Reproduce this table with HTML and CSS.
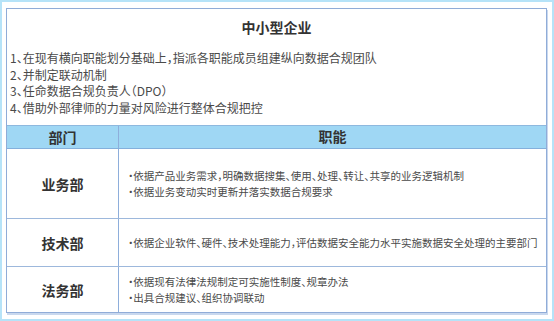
FILE: index.html
```html
<!DOCTYPE html>
<html lang="zh">
<head>
<meta charset="utf-8">
<link rel="stylesheet" href="styles.css">
</head>
<body>
<div class="frame">
  <div class="panel">
    <div class="title">中小型企业</div>
    <ol class="steps">
      <li>1、在现有横向职能划分基础上，指派各职能成员组建纵向数据合规团队</li>
      <li>2、并制定联动机制</li>
      <li>3、任命数据合规负责人（DPO）</li>
      <li>4、借助外部律师的力量对风险进行整体合规把控</li>
    </ol>
    <div class="table">
      <div class="row head">
        <div class="dept">部门</div>
        <div class="duty center">职能</div>
      </div>
      <div class="row r1">
        <div class="dept">业务部</div>
        <div class="duty">
          <p>·依据产品业务需求，明确数据搜集、使用、处理、转让、共享的业务逻辑机制</p>
          <p>·依据业务变动实时更新并落实数据合规要求</p>
        </div>
      </div>
      <div class="row r2">
        <div class="dept">技术部</div>
        <div class="duty">
          <p>·依据企业软件、硬件、技术处理能力，评估数据安全能力水平实施数据安全处理的主要部门</p>
        </div>
      </div>
      <div class="row r3">
        <div class="dept">法务部</div>
        <div class="duty">
          <p>·依据现有法律法规制定可实施性制度、规章办法</p>
          <p>·出具合规建议、组织协调联动</p>
        </div>
      </div>
    </div>
  </div>
</div>
</body>
</html>
```
FILE: styles.css
```css
* { box-sizing: border-box; }
html, body { margin: 0; padding: 0; background: #ffffff; }
body {
  font-family: "Noto Sans CJK SC", "Noto Sans", sans-serif;
  font-feature-settings: "halt";
  color: #4a4a4a;
}
.frame {
  width: 554px;
  height: 321px;
  border: 2px solid #b6e3f8;
  padding: 6px 5px 6px 4px;
}
.panel {
  height: 305px;
  border: 1px solid #90acd8;
  box-shadow: 1px 2px 0 #c9d8ee;
  display: flex;
  flex-direction: column;
}
.title {
  font-size: 14px;
  font-weight: 700;
  color: #333;
  text-align: center;
  line-height: 20px;
  padding-top: 8px;
  height: 38px;
}
.steps {
  list-style: none;
  margin: 0;
  padding: 3px 0 0 3px;
  font-size: 12px;
  line-height: 16.7px;
  height: 78px;
}
.table { flex: 1; display: flex; flex-direction: column; }
.row { display: flex; border-top: 1px solid #9db8dc; }
.row.head { background: #9fd7f4; height: 24px; border-bottom: 1px solid #84b0dc; border-top: 1px solid #8eb8de; }
.row.head + .row { border-top: none; }
.r1 { height: 69px; }
.r2 { height: 48px; }
.r3 { flex: 1; }
.dept {
  width: 112px;
  flex: none;
  border-right: 1px solid #8eaedb;
  display: flex;
  align-items: center;
  justify-content: center;
  font-size: 14px;
  font-weight: 700;
  color: #333;
}
.duty {
  flex: 1;
  display: flex;
  flex-direction: column;
  justify-content: center;
  padding-left: 9px;
  font-size: 10.5px;
  line-height: 15.5px;
}
.duty.center { align-items: center; font-size: 14px; font-weight: 700; color: #333; padding-left: 0; }
.duty p { margin: 0; }
```
